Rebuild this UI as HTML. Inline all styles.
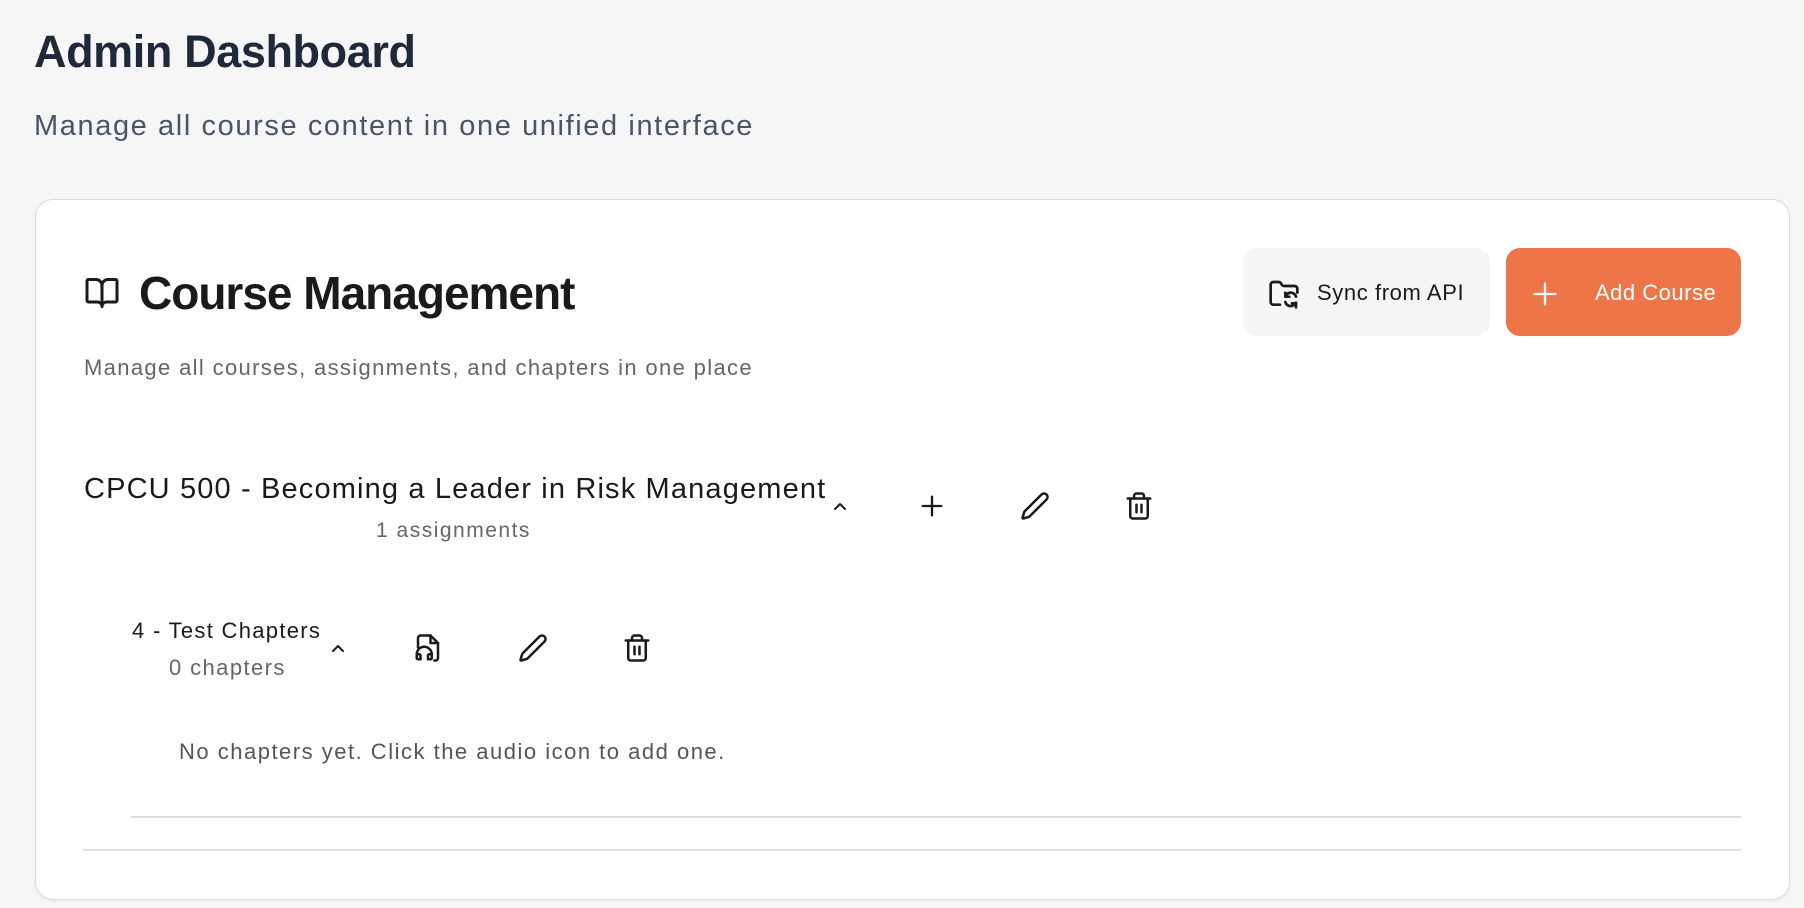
<!DOCTYPE html>
<html><head><meta charset="utf-8"><style>
*{margin:0;padding:0;box-sizing:border-box}
body{width:1804px;height:908px;background:#f6f6f6;font-family:"Liberation Sans",sans-serif;position:relative;overflow:hidden}
.a{position:absolute;white-space:nowrap}
svg{position:absolute;fill:none;stroke:#1a1a1a;stroke-width:2;stroke-linecap:round;stroke-linejoin:round}
</style></head><body>
<div class="a" style="left:34px;top:26px;font-size:45px;font-weight:bold;color:#1e293b;letter-spacing:-0.4px">Admin Dashboard</div>
<div class="a" style="left:34px;top:110px;font-size:29px;color:#475569;letter-spacing:1.6px">Manage all course content in one unified interface</div>

<div class="a" style="left:35px;top:199px;width:1755px;height:701px;background:#fff;border:1px solid #dcdcdc;border-radius:18px;box-shadow:0 1px 3px rgba(0,0,0,0.06)"></div>

<svg style="left:84px;top:275px" width="36" height="36" viewBox="0 0 24 24"><path d="M12 7v14"/><path d="M3 18a1 1 0 0 1-1-1V4a1 1 0 0 1 1-1h5a4 4 0 0 1 4 4 4 4 0 0 1 4-4h5a1 1 0 0 1 1 1v13a1 1 0 0 1-1 1h-6a3 3 0 0 0-3 3 3 3 0 0 0-3-3z"/></svg>
<div class="a" style="left:139px;top:266px;font-size:46px;font-weight:bold;color:#1a1a1a;letter-spacing:-1px">Course Management</div>
<div class="a" style="left:84px;top:355px;font-size:22px;color:#666;letter-spacing:1.35px">Manage all courses, assignments, and chapters in one place</div>

<div class="a" style="left:1243px;top:248px;width:247px;height:88px;background:#f5f5f5;border-radius:14px"></div>
<svg style="left:1268px;top:278px" width="32" height="32" viewBox="0 0 24 24"><path d="M9 20H4a2 2 0 0 1-2-2V5a2 2 0 0 1 2-2h3.9a2 2 0 0 1 1.7.9l.8 1.2a2 2 0 0 0 1.7.9H20a2 2 0 0 1 2 2v3"/><path d="M21 14a4 4 0 0 0-7-1.5l-1 1"/><path d="M13 11v3h3"/><path d="M13 18a4 4 0 0 0 7 1.5l1-1"/><path d="M21 22v-3h-3"/></svg>
<div class="a" style="left:1317px;top:280px;font-size:22px;color:#1a1a1a;letter-spacing:0.6px">Sync from API</div>

<div class="a" style="left:1506px;top:248px;width:235px;height:88px;background:#ee7547;border-radius:14px"></div>
<svg style="left:1531px;top:280px;stroke:#fff" width="28" height="28" viewBox="0 0 24 24"><path d="M12 3v18M3 12h18"/></svg>
<div class="a" style="left:1595px;top:280px;font-size:22px;color:#fff;letter-spacing:0.5px">Add Course</div>

<div class="a" style="left:84px;top:473px;font-size:29px;color:#1a1a1a;letter-spacing:1.15px">CPCU 500 - Becoming a Leader in Risk Management</div>
<div class="a" style="left:376px;top:519px;font-size:21px;color:#666;letter-spacing:1.5px">1 assignments</div>
<svg style="left:828px;top:494px" width="24" height="24" viewBox="0 0 24 24"><path d="M7 15l5-5 5 5"/></svg>
<svg style="left:918px;top:492px" width="28" height="28" viewBox="0 0 24 24"><path d="M12 4v16M4 12h16"/></svg>
<svg style="left:1020px;top:491px" width="30" height="30" viewBox="0 0 24 24"><path d="M21.2 6.8a2.8 2.8 0 0 0-4-4L3.8 16.2a2 2 0 0 0-.5.8l-1.3 4.4a.5.5 0 0 0 .6.6l4.4-1.3a2 2 0 0 0 .8-.5z"/></svg>
<svg style="left:1124px;top:491px" width="30" height="30" viewBox="0 0 24 24"><path d="M3 6h18"/><path d="M19 6v14a2 2 0 0 1-2 2H7a2 2 0 0 1-2-2V6"/><path d="M8 6V4a2 2 0 0 1 2-2h4a2 2 0 0 1 2 2v2"/><path d="M10 11v6M14 11v6"/></svg>

<div class="a" style="left:132px;top:618px;font-size:22px;color:#1a1a1a;letter-spacing:1.3px">4 - Test Chapters</div>
<div class="a" style="left:169px;top:655px;font-size:22px;color:#666;letter-spacing:1.4px">0 chapters</div>
<svg style="left:326px;top:636px" width="24" height="24" viewBox="0 0 24 24"><path d="M7 15l5-5 5 5"/></svg>
<svg style="left:413px;top:633px" width="30" height="30" viewBox="0 0 24 24"><path d="M4 11.5V4a2 2 0 0 1 2-2h8l6 6v12a2 2 0 0 1-2 2h-1"/><path d="M14 2v6h6"/><path d="M3 20v-3a6 6 0 0 1 12 0v3"/><path d="M3 17h2a1 1 0 0 1 1 1v3H4a1 1 0 0 1-1-1zM15 17h-2a1 1 0 0 0-1 1v3h2a1 1 0 0 0 1-1z"/></svg>
<svg style="left:518px;top:633px" width="30" height="30" viewBox="0 0 24 24"><path d="M21.2 6.8a2.8 2.8 0 0 0-4-4L3.8 16.2a2 2 0 0 0-.5.8l-1.3 4.4a.5.5 0 0 0 .6.6l4.4-1.3a2 2 0 0 0 .8-.5z"/></svg>
<svg style="left:622px;top:633px" width="30" height="30" viewBox="0 0 24 24"><path d="M3 6h18"/><path d="M19 6v14a2 2 0 0 1-2 2H7a2 2 0 0 1-2-2V6"/><path d="M8 6V4a2 2 0 0 1 2-2h4a2 2 0 0 1 2 2v2"/><path d="M10 11v6M14 11v6"/></svg>

<div class="a" style="left:179px;top:739px;font-size:22px;color:#555;letter-spacing:1.5px">No chapters yet. Click the audio icon to add one.</div>
<div class="a" style="left:131px;top:816px;width:1610px;height:2px;background:#dedede"></div>
<div class="a" style="left:83px;top:849px;width:1658px;height:2px;background:#dedede"></div>
</body></html>
